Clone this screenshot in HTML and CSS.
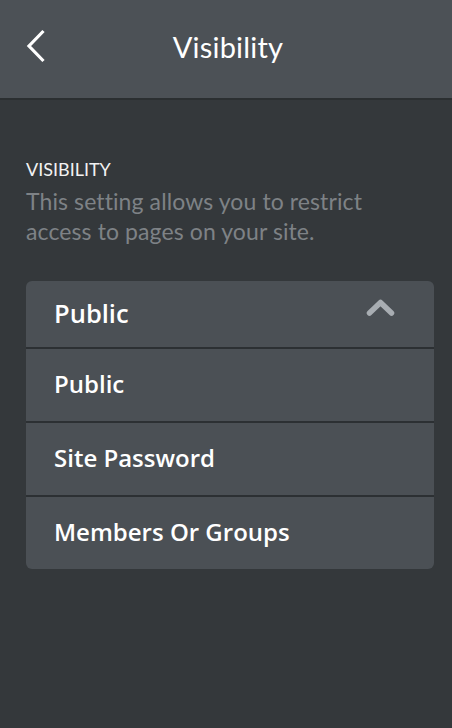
FILE: index.html
```html
<!DOCTYPE html>
<html lang="en">
<head>
<meta charset="utf-8">
<title>Visibility</title>
<link rel="stylesheet" href="styles.css">
</head>
<body>
<header class="topbar">
  <button class="back" aria-label="Back">
    <svg width="20" height="34" viewBox="0 0 20 34"><path d="M17.5 2 L3 17 L17.5 32" fill="none" stroke="#ffffff" stroke-width="3.2"/></svg>
  </button>
  <h1 class="title">Visibility</h1>
</header>
<main class="content">
  <h2 class="label">VISIBILITY</h2>
  <p class="desc">This setting allows you to restrict access to pages on your site.</p>
  <div class="select">
    <div class="select-head">
      <span>Public</span>
      <svg class="caret" width="29" height="22" viewBox="0 0 29 22"><path d="M3.5 17 L14.5 6.5 L25.5 17" fill="none" stroke="#a8adb2" stroke-width="5.5" stroke-linecap="round" stroke-linejoin="round"/></svg>
    </div>
    <div class="option">Public</div>
    <div class="option">Site Password</div>
    <div class="option">Members Or Groups</div>
  </div>
</main>
</body>
</html>
```
FILE: styles.css
```css
* { box-sizing: border-box; }
html, body { margin: 0; padding: 0; }
body {
  background: #34383b;
  font-family: Lato, "Open Sans", sans-serif;
  color: #ffffff;
  width: 452px;
  min-height: 728px;
}
.topbar {
  position: relative;
  height: 100px;
  background: #4c5156;
  border-bottom: 2px solid #2b2f31;
  display: flex;
  align-items: center;
  justify-content: center;
}
.back {
  position: absolute;
  left: 26px;
  top: 29px;
  padding: 0;
  border: 0;
  background: none;
  line-height: 0;
}
.title {
  margin: 0;
  font-size: 29px;
  font-weight: 400;
  letter-spacing: 0.2px;
  padding-bottom: 6px;
  padding-left: 4px;
}
.content {
  padding: 58px 18px 0 26px;
}
.label {
  margin: 0;
  font-size: 18px;
  font-weight: 400;
  line-height: 22px;
  color: #f2f2f2;
}
.desc {
  margin: 6px 0 0;
  font-size: 23px;
  line-height: 30px;
  letter-spacing: 0.1px;
  color: #7e8286;
  max-width: 370px;
}
.select {
  margin-top: 35px;
  background: #4b5055;
  border-radius: 6px;
  overflow: hidden;
  font-family: "Open Sans", Lato, sans-serif;
  font-weight: 600;
}
.select-head {
  height: 66px;
  display: flex;
  align-items: center;
  justify-content: space-between;
  padding: 0 39px 2px 28px;
  font-size: 25.5px;
}
.caret { display: block; margin-top: -12px; }
.option {
  height: 74px;
  border-top: 2px solid #2c3033;
  display: flex;
  align-items: center;
  padding: 0 28px 4px;
  font-size: 24px;
}
```
